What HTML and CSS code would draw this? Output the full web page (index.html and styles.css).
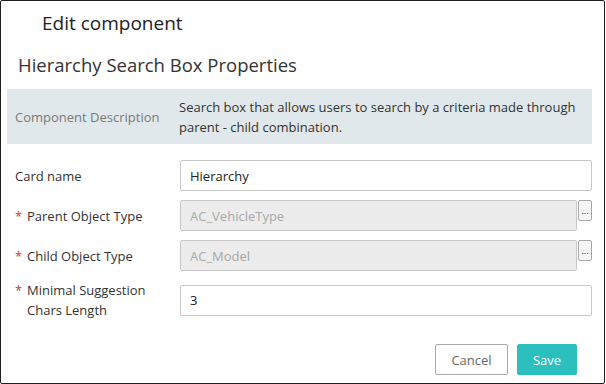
FILE: index.html
```html
<!DOCTYPE html>
<html lang="en">
<head>
  <meta charset="UTF-8" />
  <title>Edit component</title>
  <link rel="stylesheet" href="styles.css">
</head>
<body>
  <div class="dialog">
    <div class="dialog-header">
      <h1>Edit component</h1>
    </div>

    <div class="dialog-body">
      <h2>Hierarchy Search Box Properties</h2>

      <div class="desc">
        <div class="desc-label">Component Description</div>
        <div class="desc-text">Search box that allows users to search by a criteria made through parent - child combination.</div>
      </div>

      <div class="field">
        <label class="field-label">Card name</label>
        <div class="field-control">
          <input type="text" class="input" value="Hierarchy" />
        </div>
      </div>

      <div class="field">
        <label class="field-label"><span class="req">*</span>Parent Object Type</label>
        <div class="field-control">
          <input type="text" class="input" value="AC_VehicleType" disabled />
          <button class="pick-btn">...</button>
        </div>
      </div>

      <div class="field">
        <label class="field-label"><span class="req">*</span>Child Object Type</label>
        <div class="field-control">
          <input type="text" class="input" value="AC_Model" disabled />
          <button class="pick-btn">...</button>
        </div>
      </div>

      <div class="field field-tall">
        <label class="field-label"><span class="req">*</span>Minimal Suggestion<br>Chars Length</label>
        <div class="field-control">
          <input type="text" class="input" value="3" />
        </div>
      </div>
    </div>

    <div class="dialog-footer">
      <button class="btn btn-cancel">Cancel</button>
      <button class="btn btn-save">Save</button>
    </div>
  </div>
</body>
</html>
```

FILE: styles.css
```css
body {
  margin: 0;
  font-family: "Open Sans", "Noto Sans", sans-serif;
  color: #333;
  background-color: #fff;
}
.dialog {
  width: 605px;
  height: 384px;
  box-sizing: border-box;
  border: 1px solid #1e1e1e;
  border-radius: 2px;
}
.dialog-header h1 {
  margin: 0;
  padding: 8px 0 0 41px;
  font-size: 19px;
  font-weight: normal;
  line-height: 28px;
  color: #222;
}
.dialog-body {
  padding: 0 12px 0 6px;
}
.dialog-body h2 {
  margin: 15px 0 0 11px;
  font-size: 18.5px;
  font-weight: normal;
  line-height: 26px;
  color: #333;
}
.desc {
  display: flex;
  align-items: center;
  margin-top: 11px;
  height: 55px;
  padding: 0 8px;
  background-color: #e1e8eb;
  font-size: 13px;
}
.desc-label {
  width: 164px;
  color: #7a7a7a;
}
.desc-text {
  flex: 1;
  line-height: 20px;
  color: #333;
}
.field {
  display: flex;
  align-items: center;
  margin: 0 0 9px 8px;
}
.desc + .field {
  margin-top: 16px;
}
.field-label {
  flex: none;
  width: 165px;
  box-sizing: border-box;
  font-size: 13px;
  line-height: 20px;
  color: #333;
}
.field-tall {
  margin: 7px 0 0 8px;
}
.field-tall .field-label {
  padding-left: 12px;
  text-indent: -12px;
}
.req {
  display: inline-block;
  width: 12px;
  color: #c0392b;
  text-indent: 0;
}
.field-control {
  flex: 1;
  display: flex;
  align-items: flex-start;
}
.input {
  flex: 1;
  min-width: 0;
  height: 31px;
  box-sizing: border-box;
  padding: 0 9px;
  border: 1px solid #c8c8c8;
  border-radius: 2px;
  font-family: inherit;
  font-size: 13px;
  color: #222;
  background-color: #fff;
}
.input:disabled {
  background-color: #ececec;
  color: #a8a8a8;
}
.pick-btn {
  flex: none;
  width: 14px;
  height: 21px;
  margin-left: 1px;
  padding: 0;
  border: 1px solid #a8a8a8;
  border-radius: 2px;
  background-color: #f6f6f6;
  font-family: inherit;
  font-size: 9px;
  line-height: 14px;
  color: #222;
}
.dialog-footer {
  display: flex;
  justify-content: flex-end;
  gap: 9px;
  padding: 24px 27px 0 0;
}
.btn {
  height: 31px;
  box-sizing: border-box;
  border-radius: 2px;
  font-family: inherit;
  font-size: 13px;
  cursor: pointer;
}
.btn-cancel {
  width: 73px;
  border: 1px solid #a9a9a9;
  background-color: #fff;
  color: #666;
}
.btn-save {
  width: 60px;
  border: 1px solid #2bbfbe;
  background-color: #2bbfbe;
  color: #fff;
}
```
